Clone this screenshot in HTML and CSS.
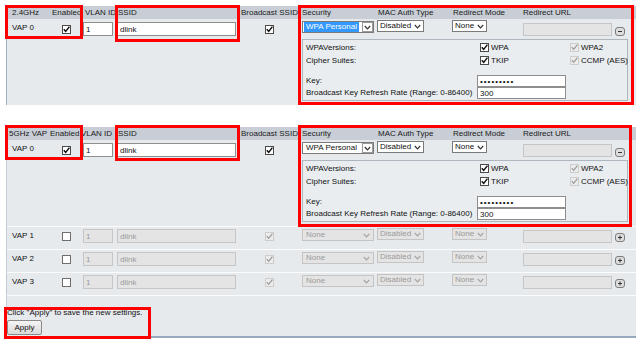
FILE: index.html
```html
<!DOCTYPE html>
<html lang="en">
<head>
    <meta charset="UTF-8">
    <title>Wireless VAP Settings</title>
    <link rel="stylesheet" href="styles.css">
</head>
<body>
<svg class="sprite" xmlns="http://www.w3.org/2000/svg">
    <symbol id="cb-on" viewBox="0 0 9 9">
        <rect x=".5" y=".5" width="8" height="8" fill="#fff" stroke="#4a4a4a"/>
        <path d="M1.8 4.2l1.9 2.2L7.4 1.6" fill="none" stroke="#111" stroke-width="1.5"/>
    </symbol>
    <symbol id="cb-off" viewBox="0 0 9 9">
        <rect x=".5" y=".5" width="8" height="8" fill="#fff" stroke="#6e6e6e"/>
    </symbol>
    <symbol id="cb-dis" viewBox="0 0 9 9">
        <rect x=".5" y=".5" width="8" height="8" fill="#ececec" stroke="#cdcdcd"/>
        <path d="M1.8 4.2l1.9 2.2L7.4 1.6" fill="none" stroke="#9a9a9a" stroke-width="1.2"/>
    </symbol>
    <symbol id="chev" viewBox="0 0 7 5">
        <path d="M.8 1l2.7 2.8L6.2 1" fill="none" stroke="currentColor" stroke-width="1.2"/>
    </symbol>
    <symbol id="minus" viewBox="0 0 10 9">
        <rect x=".5" y=".5" width="9" height="8" rx="2.5" fill="#dedede" stroke="#7c7c7c"/>
        <path d="M3 4.5h4" stroke="#333"/>
    </symbol>
    <symbol id="plus" viewBox="0 0 10 9">
        <rect x=".5" y=".5" width="9" height="8" rx="2.5" fill="#dedede" stroke="#7c7c7c"/>
        <path d="M3 4.5h4M5 2.5v4" stroke="#333"/>
    </symbol>
</svg>

<div class="page">

    <!-- 2.4GHz -->
    <div class="panel">
        <div class="grid head">
            <div class="h-first">2.4GHz</div>
            <div>Enabled</div>
            <div>VLAN ID</div>
            <div>SSID</div>
            <div>Broadcast SSID</div>
            <div>Security</div>
            <div>MAC Auth Type</div>
            <div>Redirect Mode</div>
            <div>Redirect URL</div>
        </div>
        <div class="grid row">
            <div class="name">VAP 0</div>
            <div class="mid"><svg class="cb"><use href="#cb-on"/></svg></div>
            <div><input class="inp vlan" type="text" value="1"></div>
            <div><input class="inp ssid" type="text" value="dlink"></div>
            <div class="mid"><svg class="cb"><use href="#cb-on"/></svg></div>
            <div>
                <span class="sel sec"><span class="val hl">WPA Personal</span><span class="arrbox"><svg class="chev"><use href="#chev"/></svg></span></span>
            </div>
            <div><span class="sel mac">Disabled <svg class="chev"><use href="#chev"/></svg></span></div>
            <div><span class="sel mode">None <svg class="chev"><use href="#chev"/></svg></span></div>
            <div class="urlcell"><input class="inp url" type="text" disabled><svg class="ico"><use href="#minus"/></svg></div>
        </div>
        <div class="grid wpa-row">
            <div class="wpa">
                <div class="wl">WPAVersions:</div>
                <div class="wc"><svg class="cb"><use href="#cb-on"/></svg>WPA</div>
                <div class="wc dis"><svg class="cb"><use href="#cb-dis"/></svg>WPA2</div>
                <div class="wl">Cipher Suites:</div>
                <div class="wc"><svg class="cb"><use href="#cb-on"/></svg>TKIP</div>
                <div class="wc dis"><svg class="cb"><use href="#cb-dis"/></svg>CCMP (AES)</div>
                <div class="wl key">Key:</div>
                <div class="key"><input class="inp pass" type="password" value="123456789"></div>
                <div class="key"></div>
                <div class="wl rate-l">Broadcast Key Refresh Rate (Range: 0-86400)</div>
                <div><input class="inp rate" type="text" value="300"></div>
                <div></div>
            </div>
        </div>
    </div>

    <!-- 5GHz -->
    <div class="panel second">
        <div class="grid head tight">
            <div>5GHz VAP</div>
            <div>Enabled</div>
            <div>VLAN ID</div>
            <div>SSID</div>
            <div>Broadcast SSID</div>
            <div>Security</div>
            <div>MAC Auth Type</div>
            <div>Redirect Mode</div>
            <div>Redirect URL</div>
        </div>
        <div class="grid row">
            <div class="name">VAP 0</div>
            <div class="mid"><svg class="cb"><use href="#cb-on"/></svg></div>
            <div><input class="inp vlan" type="text" value="1"></div>
            <div><input class="inp ssid" type="text" value="dlink"></div>
            <div class="mid"><svg class="cb"><use href="#cb-on"/></svg></div>
            <div>
                <span class="sel sec"><span class="val">WPA Personal</span><span class="arrbox"><svg class="chev"><use href="#chev"/></svg></span></span>
            </div>
            <div><span class="sel mac">Disabled <svg class="chev"><use href="#chev"/></svg></span></div>
            <div><span class="sel mode">None <svg class="chev"><use href="#chev"/></svg></span></div>
            <div class="urlcell"><input class="inp url" type="text" disabled><svg class="ico"><use href="#minus"/></svg></div>
        </div>
        <div class="grid wpa-row">
            <div class="wpa">
                <div class="wl">WPAVersions:</div>
                <div class="wc"><svg class="cb"><use href="#cb-on"/></svg>WPA</div>
                <div class="wc dis"><svg class="cb"><use href="#cb-dis"/></svg>WPA2</div>
                <div class="wl">Cipher Suites:</div>
                <div class="wc"><svg class="cb"><use href="#cb-on"/></svg>TKIP</div>
                <div class="wc dis"><svg class="cb"><use href="#cb-dis"/></svg>CCMP (AES)</div>
                <div class="wl key">Key:</div>
                <div class="key"><input class="inp pass" type="password" value="123456789"></div>
                <div class="key"></div>
                <div class="wl rate-l">Broadcast Key Refresh Rate (Range: 0-86400)</div>
                <div><input class="inp rate" type="text" value="300"></div>
                <div></div>
            </div>
        </div>

        <div class="grid row vrow">
            <div class="name">VAP 1</div>
            <div class="mid"><svg class="cb"><use href="#cb-off"/></svg></div>
            <div><input class="inp vlan" type="text" value="1" disabled></div>
            <div><input class="inp ssid" type="text" value="dlink" disabled></div>
            <div class="mid"><svg class="cb"><use href="#cb-dis"/></svg></div>
            <div><span class="sel sec off"><span class="val">None</span><svg class="chev"><use href="#chev"/></svg></span></div>
            <div><span class="sel mac off">Disabled <svg class="chev"><use href="#chev"/></svg></span></div>
            <div><span class="sel mode off">None <svg class="chev"><use href="#chev"/></svg></span></div>
            <div class="urlcell"><input class="inp url" type="text" disabled><svg class="ico"><use href="#plus"/></svg></div>
        </div>
        <div class="grid row vrow">
            <div class="name">VAP 2</div>
            <div class="mid"><svg class="cb"><use href="#cb-off"/></svg></div>
            <div><input class="inp vlan" type="text" value="1" disabled></div>
            <div><input class="inp ssid" type="text" value="dlink" disabled></div>
            <div class="mid"><svg class="cb"><use href="#cb-dis"/></svg></div>
            <div><span class="sel sec off"><span class="val">None</span><svg class="chev"><use href="#chev"/></svg></span></div>
            <div><span class="sel mac off">Disabled <svg class="chev"><use href="#chev"/></svg></span></div>
            <div><span class="sel mode off">None <svg class="chev"><use href="#chev"/></svg></span></div>
            <div class="urlcell"><input class="inp url" type="text" disabled><svg class="ico"><use href="#plus"/></svg></div>
        </div>
        <div class="grid row vrow last">
            <div class="name">VAP 3</div>
            <div class="mid"><svg class="cb"><use href="#cb-off"/></svg></div>
            <div><input class="inp vlan" type="text" value="1" disabled></div>
            <div><input class="inp ssid" type="text" value="dlink" disabled></div>
            <div class="mid"><svg class="cb"><use href="#cb-dis"/></svg></div>
            <div><span class="sel sec off"><span class="val">None</span><svg class="chev"><use href="#chev"/></svg></span></div>
            <div><span class="sel mac off">Disabled <svg class="chev"><use href="#chev"/></svg></span></div>
            <div><span class="sel mode off">None <svg class="chev"><use href="#chev"/></svg></span></div>
            <div class="urlcell"><input class="inp url" type="text" disabled><svg class="ico"><use href="#plus"/></svg></div>
        </div>

        <div class="footer">
            <p>Click "Apply" to save the new settings.</p>
            <button class="btn" type="button">Apply</button>
        </div>
    </div>

    <!-- highlight marks -->
    <div class="mark m1"></div>
    <div class="mark m2"></div>
    <div class="mark m3"></div>
    <div class="mark m4"></div>
    <div class="mark m5"></div>
    <div class="mark m6"></div>
    <div class="mark m7"></div>
</div>
</body>
</html>
```

FILE: styles.css
```css
* {
    box-sizing: border-box;
}

body {
    margin: 0;
    background: #ffffff;
    font-family: "Liberation Sans", Arial, sans-serif;
    font-size: 8px;
    color: #111;
}

.sprite {
    position: absolute;
    width: 0;
    height: 0;
}

.page {
    position: relative;
    width: 640px;
    height: 346px;
    padding: 6px 0 0 6px;
    overflow: hidden;
}

.panel {
    width: 630px;
    background-color: #e6eaed;
    border-left: 1px solid #9fb2c8;
}

.panel.second {
    margin-top: 22px;
    border-left-color: #c3ceda;
    border-bottom: 2px solid #97a9bf;
}

.grid {
    display: grid;
    grid-template-columns: 43px 33px 33px 123px 61px 76px 75px 70px 109px;
}

/* header row */
.head {
    height: 13px;
    line-height: 13px;
    background-color: #c9ced6;
    color: #1a1a1a;
    white-space: nowrap;
}

.head div {
    padding-left: 2px;
}

.head .h-first {
    padding-left: 5px;
}

.head.tight div:nth-child(2) {
    padding-left: 0;
}

.head.tight div:nth-child(3) {
    padding-left: 0;
    margin-left: -2px;
}

/* data rows */
.row {
    height: 20px;
    align-items: start;
}

.name {
    padding: 2px 0 0 5px;
    line-height: 13px;
}

.mid {
    display: flex;
    justify-content: center;
}

.cb {
    width: 9px;
    height: 9px;
    flex: none;
}

.row .cb {
    margin-top: 6px;
}

.inp {
    font: inherit;
    height: 14px;
    margin: 3px 0 0 0;
    padding: 0 2px;
    border: 1px solid #8e8e8e;
    background: #fff;
    color: #111;
    outline: none;
}

.inp:disabled {
    background-color: #e4e4e4;
    border-color: #c6c6c6;
    color: #9a9a9a;
}

.vlan {
    width: 30px;
}

.ssid {
    width: 119px;
    margin-left: 1px;
}

.urlcell {
    display: flex;
    align-items: flex-start;
}

.url {
    width: 89px;
    height: 13px;
    margin-left: 2px;
    margin-top: 4px;
}

.ico {
    width: 10px;
    height: 9px;
    margin: 8px 0 0 3px;
}

/* fake select boxes */
.sel {
    display: inline-flex;
    align-items: center;
    gap: 3px;
    height: 12px;
    margin-top: 1px;
    padding: 0 2px;
    border: 1px solid #7a7a7a;
    background: #fff;
    line-height: 10px;
    white-space: nowrap;
    color: #111;
}

.chev {
    width: 7px;
    height: 5px;
    color: #333;
}

.sec {
    width: 72px;
    margin-left: 2px;
    margin-top: 2px;
    padding: 0 0 0 1px;
    justify-content: space-between;
}

.sec .val {
    padding: 0 2px;
}

.sec .val.hl {
    flex: 1;
    background-color: #3399ff;
    color: #fff;
}

.arrbox {
    display: flex;
    align-items: center;
    justify-content: center;
    width: 11px;
    height: 10px;
    border: 1px solid #9a9a9a;
    background: #fff;
}

.mac {
    margin-left: 1px;
}

.mode {
    margin-left: 1px;
}

.sel.off {
    background-color: #e4e4e4;
    border-color: #c4c4c4;
    color: #9a9a9a;
}

.sel.off .chev {
    color: #a5a5a5;
}

.sec.off {
    padding-right: 3px;
}

/* WPA details box */
.wpa-row {
    height: 66px;
}

.wpa {
    grid-column: 6 / 10;
    margin: 0 2px;
    height: 62px;
    padding: 1px 0 1px 3px;
    border: 1px solid #aeb6bf;
    background-color: #e9edf0;
    display: grid;
    grid-template-columns: 171px 91px 1fr;
    grid-template-rows: 13px 13px auto auto;
    white-space: nowrap;
}

.wl {
    line-height: 13px;
}

.wl.key,
.wl.rate-l {
    line-height: 12px;
}

.key {
    margin-top: 8px;
}

.wc {
    display: flex;
    align-items: center;
    gap: 2px;
    padding-left: 3px;
}

.wc.dis {
    padding-left: 2px;
}

.wpa .inp {
    width: 89px;
    height: 12px;
    margin: 0;
}

.pass {
    letter-spacing: 1px;
}

/* disabled VAP rows */
.vrow {
    height: 23px;
    border-top: 1px solid #fbfcfd;
}

.vrow.last {
    border-bottom: 1px solid #fbfcfd;
    height: 24px;
}

.vrow .inp {
    margin-top: 2px;
}

.vrow .url {
    margin-top: 3px;
}

.vrow .cb {
    margin-top: 5px;
}

.vrow .sec {
    margin-top: 2px;
}

.vrow .ico {
    margin-top: 6px;
}

/* footer */
.footer {
    padding: 10px 0 1px 0;
}

.footer p {
    margin: 0;
    line-height: 13px;
}

.btn {
    font: inherit;
    width: 35px;
    height: 15px;
    margin-top: 1px;
    padding: 0;
    border: 1px solid #8a8a8a;
    border-radius: 2px;
    background: linear-gradient(#f5f5f5, #d9d9d9);
    color: #111;
}

/* red annotation boxes */
.mark {
    position: absolute;
    border: 3px solid #ff0000;
}

.m1 { left: 5px; top: 5px; width: 78px; height: 34px; }
.m2 { left: 115px; top: 5px; width: 125px; height: 37px; }
.m3 { left: 298px; top: 5px; width: 336px; height: 100px; }
.m4 { left: 5px; top: 125px; width: 78px; height: 35px; }
.m5 { left: 115px; top: 125px; width: 125px; height: 36px; }
.m6 { left: 298px; top: 125px; width: 334px; height: 102px; }
.m7 { left: 4px; top: 307px; width: 147px; height: 32px; }
```
